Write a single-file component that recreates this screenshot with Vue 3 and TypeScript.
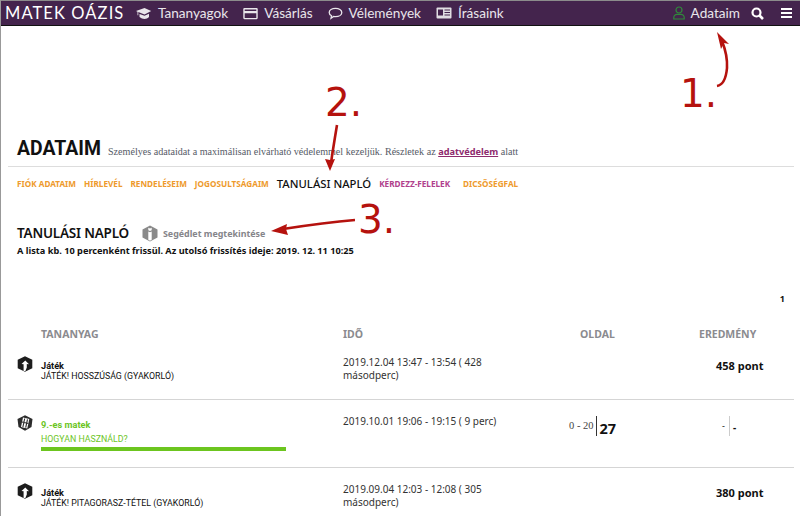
<script setup lang="ts">
interface Row {
  icon: "game" | "film";
  title: string;
  lesson: string;
  time: string;
  points?: string;
  green?: boolean;
}

const tabs = [
  { label: "FIÓK ADATAIM", cls: "orange" },
  { label: "HÍRLEVÉL", cls: "orange" },
  { label: "RENDELÉSEIM", cls: "orange" },
  { label: "JOGOSULTSÁGAIM", cls: "orange" },
  { label: "TANULÁSI NAPLÓ", cls: "active" },
  { label: "KÉRDEZZ-FELELEK", cls: "pink" },
  { label: "DICSŐSÉGFAL", cls: "orange" },
];

const rows: Row[] = [
  {
    icon: "game",
    title: "Játék",
    lesson: "JÁTÉK! HOSSZÚSÁG (GYAKORLÓ)",
    time: "2019.12.04 13:47 - 13:54 ( 428 másodperc)",
    points: "458 pont",
  },
  {
    icon: "film",
    title: "9.-es matek",
    lesson: "HOGYAN HASZNÁLD?",
    time: "2019.10.01 19:06 - 19:15 ( 9 perc)",
    green: true,
  },
  {
    icon: "game",
    title: "Játék",
    lesson: "JÁTÉK! PITAGORASZ-TÉTEL (GYAKORLÓ)",
    time: "2019.09.04 12:03 - 12:08 ( 305 másodperc)",
    points: "380 pont",
  },
];
</script>

<template>
  <div class="page">
    <header class="topbar">
      <span class="logo">MATEK OÁZIS</span>
      <nav class="menu">
        <a class="item">
          <svg width="17" height="13" viewBox="0 0 16 13"><path d="M9 1 .5 4l1.500.7v3.500h.8V5.100L9 7.500 15.700 4z" fill="#e9e6eb" /><path d="M4 7v3c1.500 1.300 3.300 1.900 5 1.900s3.400-.6 4.500-1.900V6.700L9 8.700z" fill="#e9e6eb" /></svg>
          Tananyagok
        </a>
        <a class="item">
          <svg width="15" height="13" viewBox="0 0 16 13"><path fill-rule="evenodd" d="M1.500.5h13a1.200 1.200 0 0 1 1.200 1.200v9.600a1.200 1.200 0 0 1-1.200 1.200h-13A1.200 1.200 0 0 1 .3 11.300V1.700A1.200 1.200 0 0 1 1.500.5zM1.800 2.200v1.600h12.400V2.200zM1.800 6.300v5h12.400v-5z" fill="#e9e6eb" /></svg>
          Vásárlás
        </a>
        <a class="item">
          <svg width="15" height="13" viewBox="0 0 15 13"><path d="M7.500 1.300c3.500 0 6.300 1.800 6.300 4.200s-2.800 4.200-6.300 4.200c-.7 0-1.300-.1-1.900-.2L3 11.300l.5-2.500C2 8 1.200 6.800 1.200 5.500c0-2.400 2.800-4.200 6.300-4.200z" fill="none" stroke="#e9e6eb" stroke-width="1.300" /></svg>
          Vélemények
        </a>
        <a class="item">
          <svg width="16" height="12" viewBox="0 0 16 12"><rect x=".5" y=".5" width="15" height="11" rx="1" fill="#e0dde2" /><rect x="2" y="2.500" width="5" height="6" fill="#44244d" /><path d="M8.500 3h5.500M8.500 5.500h5.500M8.500 8h5.500" stroke="#44244d" stroke-width="1" /></svg>
          Írásaink
        </a>
      </nav>
      <div class="user">
        <a class="item">
          <svg width="12" height="14" viewBox="0 0 12 14"><circle cx="6" cy="4" r="3" fill="none" stroke="#2f8a3a" stroke-width="1.200" /><path d="M.8 13v-1.500C.8 9.500 2.500 8.300 4 8.300h4c1.500 0 3.200 1.200 3.200 3.200V13z" fill="none" stroke="#2f8a3a" stroke-width="1.200" /></svg>
          Adataim
        </a>
        <svg class="search" width="13" height="13" viewBox="0 0 13 13"><circle cx="5.500" cy="5.500" r="4" fill="none" stroke="#fff" stroke-width="2.200" /><path d="M8.500 8.500l3.500 3.500" stroke="#fff" stroke-width="2.600" /></svg>
        <span class="burger"><i></i><i></i><i></i></span>
      </div>
    </header>

    <main class="content">
      <section class="title-row">
        <h1>ADATAIM</h1>
        <p class="lead">
          Személyes adataidat a maximálisan elvárható védelemmel kezeljük. Részletek az
          <a>adatvédelem</a> alatt
        </p>
      </section>

      <nav class="tabs">
        <a v-for="tab in tabs" :key="tab.label" :class="tab.cls">{{ tab.label }}</a>
      </nav>

      <section class="log-head">
        <div class="log-title">
          <h2>TANULÁSI NAPLÓ</h2>
          <a class="help">
            <svg width="16" height="17" viewBox="0 0 16 17"><path d="M8 .5 15.500 4.500v8L8 16.500.5 12.500v-8z" fill="#8a8a8a" /><path d="M6.300 2.800 8 3.600l1.700-.8v2.400L8 6 6.300 5.200zM6.300 6.500 8 7.300l1.700-.8v8.300L8 15.700l-1.700-.9z" fill="#fff" /></svg>
            Segédlet megtekintése
          </a>
        </div>
        <p class="refresh">A lista kb. 10 percenként frissül. Az utolsó frissítés ideje: 2019. 12. 11 10:25</p>
      </section>

      <div class="pager">1</div>

      <div class="table">
        <div class="thead">
          <span class="first">TANANYAG</span>
          <span>IDŐ</span>
          <span>OLDAL</span>
          <span>EREDMÉNY</span>
        </div>
        <div v-for="row in rows" :key="row.time" class="row" :class="{ tall: row.green }">
          <div class="lesson">
            <svg v-if="row.icon === 'game'" class="licon" width="16" height="16" viewBox="0 0 16 16">
              <path d="M8 .3 15.300 3.800v8.400L8 15.800.7 12.200V3.800z" fill="#1d1d1d" />
              <path d="M8.300 4.500 12 8.300 9.800 8v3.500L8.400 15H6.600V8.200L4.500 8z" fill="#fff" />
            </svg>
            <svg v-else class="licon" width="16" height="16" viewBox="0 0 16 16">
              <path d="M8 .3 15.500 4l-1 8L8 15.700 1.500 12 .5 4z" fill="#2c2c2c" />
              <path d="M6 2.500 12.300 4 10.300 13.500 4 12z" fill="#fff" />
              <path d="M7.700 3.500 5.900 12M10.500 4.300 8.700 12.700M5 7l6.400 1.500" stroke="#2c2c2c" stroke-width="1.100" />
            </svg>
            <div class="ltext">
              <strong :class="{ green: row.green }">{{ row.title }}</strong>
              <span :class="{ green: row.green }">{{ row.lesson }}</span>
              <div v-if="row.green" class="progress"></div>
            </div>
          </div>
          <div class="time">{{ row.time }}</div>
          <div class="pages">
            <template v-if="row.green">
              <small>0 - 20</small><b>27</b>
            </template>
          </div>
          <div class="result">
            <b v-if="row.points" class="pts">{{ row.points }}</b>
            <template v-else>
              <small>-</small><b>-</b>
            </template>
          </div>
        </div>
      </div>
    </main>

    <!-- kézzel rajzolt jelölések a képernyőképen -->
    <svg class="marks" width="800" height="516" viewBox="0 0 800 516">
      <g fill="none" stroke="#b5120e" stroke-width="2.600">
        <path d="M717 86c6-1 9-7 10-18 .5-9-1-17-5-27" />
        <path d="M337 125c-2 12-4 24-6 38" />
        <path d="M355 220c-24 2-46 5-72 9" />
      </g>
      <g fill="#b5120e">
        <path d="M717 32l12 12-5-1-3 6z" />
        <path d="M330 171l-5-12 5 1 5-1z" />
        <path d="M271 231l16-7-1 5 2 6z" />
      </g>
      <g class="num" fill="#b5120e">
        <text x="680" y="107">1.</text>
        <text x="325" y="116">2.</text>
        <text x="358" y="233">3.</text>
      </g>
    </svg>
  </div>
</template>

<style scoped>
.page {
  position: relative;
  width: 800px;
  height: 516px;
  overflow: hidden;
  box-sizing: border-box;
  border-left: 1px solid #999;
  font-family: "Noto Sans", sans-serif;
  color: #111;
  background: #fff;
}
.topbar {
  display: flex;
  align-items: center;
  height: 24px;
  background: #44244d;
  border-top: 1px solid #8c8c8c;
  border-bottom: 1px solid #111;
  color: #e9e6eb;
  font-family: "Lato", sans-serif;
  font-size: 13.600px;
}
.logo {
  width: 134px;
  padding-left: 4px;
  box-sizing: border-box;
  font-family: "Lato", sans-serif;
  font-size: 16.500px;
  letter-spacing: 1.100px;
  color: #fff;
  white-space: nowrap;
}
.menu {
  display: flex;
  gap: 15px;
}
.item {
  display: flex;
  align-items: center;
  gap: 6px;
}
.user {
  margin-left: auto;
  display: flex;
  align-items: center;
  padding-right: 8px;
}
.search {
  margin-left: 11px;
}
.burger {
  margin-left: 17px;
  display: flex;
  flex-direction: column;
  gap: 2px;
}
.burger i {
  display: block;
  width: 11px;
  height: 2px;
  background: #fff;
}
.content {
  padding: 0 6px 0 7px;
}
.title-row {
  display: flex;
  align-items: baseline;
  gap: 8px;
  margin-top: 111px;
  height: 29px;
  padding-left: 9px;
  border-bottom: 1px solid #ddd;
}
h1 {
  margin: 0;
  width: 83px;
  flex: none;
  font-family: "Roboto", sans-serif;
  font-size: 19.400px;
  line-height: 24px;
  font-weight: 700;
  white-space: nowrap;
}
.lead {
  margin: 0;
  font-family: "Liberation Serif", serif;
  font-size: 10.100px;
  color: #555a66;
  white-space: nowrap;
}
.lead a {
  font-family: "Noto Sans", sans-serif;
  font-size: 9.200px;
  font-weight: 700;
  color: #8e2a6e;
  text-decoration: underline;
}
.tabs {
  display: flex;
  align-items: center;
  gap: 8px;
  height: 32px;
  padding-left: 9px;
  font-size: 8.200px;
  font-weight: 700;
  white-space: nowrap;
}
.tabs .orange {
  color: #ee9a2c;
}
.tabs .orange:last-child {
  margin-left: 5px;
}
.tabs .pink {
  color: #b0408c;
}
.tabs .active {
  color: #111;
  font-size: 11.300px;
  font-weight: 500;
}
.log-head {
  margin-top: 25px;
  padding-left: 9px;
}
.log-title {
  display: flex;
  align-items: center;
  gap: 13px;
}
h2 {
  margin: 0;
  font-size: 13.500px;
  line-height: 18px;
  font-weight: 600;
  letter-spacing: -0.2px;
}
.help {
  display: flex;
  align-items: center;
  gap: 5px;
  font-size: 8.900px;
  font-weight: 700;
  color: #85858a;
}
.refresh {
  margin: 2px 0 0;
  font-size: 9.200px;
  line-height: 14px;
  font-weight: 700;
  white-space: nowrap;
}
.pager {
  margin-top: 35px;
  height: 33px;
  padding-right: 9px;
  text-align: right;
  font-size: 9px;
  font-weight: 700;
  line-height: 12px;
}
.thead,
.row {
  display: grid;
  grid-template-columns: 335px 237px 119px 1fr;
}
.thead {
  height: 15px;
  font-size: 10.500px;
  font-weight: 700;
  color: #8b8b8f;
  align-items: center;
}
.thead .first {
  padding-left: 33px;
}
.row {
  height: 68px;
  box-sizing: border-box;
  padding-top: 18px;
  border-bottom: 1px solid #d5d5d5;
}
.thead + .row {
  height: 59px;
}
.row:last-child {
  border-bottom: 0;
}
.lesson {
  display: flex;
  padding-left: 9px;
  gap: 8px;
}
.licon {
  margin-top: -3px;
  flex: none;
}
.ltext {
  display: flex;
  flex-direction: column;
  padding-top: 1px;
  font-family: "Roboto", sans-serif;
  font-size: 8.800px;
  line-height: 11px;
}
.ltext strong {
  font-size: 9.200px;
  font-weight: 700;
}
.ltext span {
  white-space: nowrap;
}
.green {
  color: #6cc51f;
}
.row.tall .ltext span {
  margin-top: 4px;
}
.progress {
  width: 245px;
  height: 4px;
  margin-top: 2px;
  background: #6cc51f;
}
.time {
  width: 178px;
  margin-top: -3px;
  font-size: 10px;
  line-height: 12.500px;
  color: #333;
}
.pages {
  display: flex;
  align-items: flex-start;
  margin-top: -2px;
  margin-left: -11px;
}
.pages small {
  font-family: "Liberation Serif", serif;
  font-size: 10.500px;
  line-height: 20px;
  padding-right: 2px;
  border-right: 1px solid #333;
  color: #444;
}
.pages b {
  font-size: 14.500px;
  line-height: 24px;
  padding-left: 3px;
}
.result {
  display: flex;
  align-items: flex-start;
  margin-top: -2px;
  padding-left: 23px;
}
.result small {
  font-size: 9px;
  line-height: 20px;
  padding-right: 4px;
  border-right: 1px solid #ccc;
}
.result b {
  font-size: 10px;
  line-height: 22px;
  padding-left: 3px;
}
.result .pts {
  margin: 2px 0 0 -6px;
  font-size: 11px;
  line-height: 14px;
  padding: 0;
  white-space: nowrap;
}
.marks {
  position: absolute;
  left: -1px;
  top: 0;
  pointer-events: none;
}
.num {
  font-family: "DejaVu Sans", sans-serif;
  font-size: 39px;
}
</style>
